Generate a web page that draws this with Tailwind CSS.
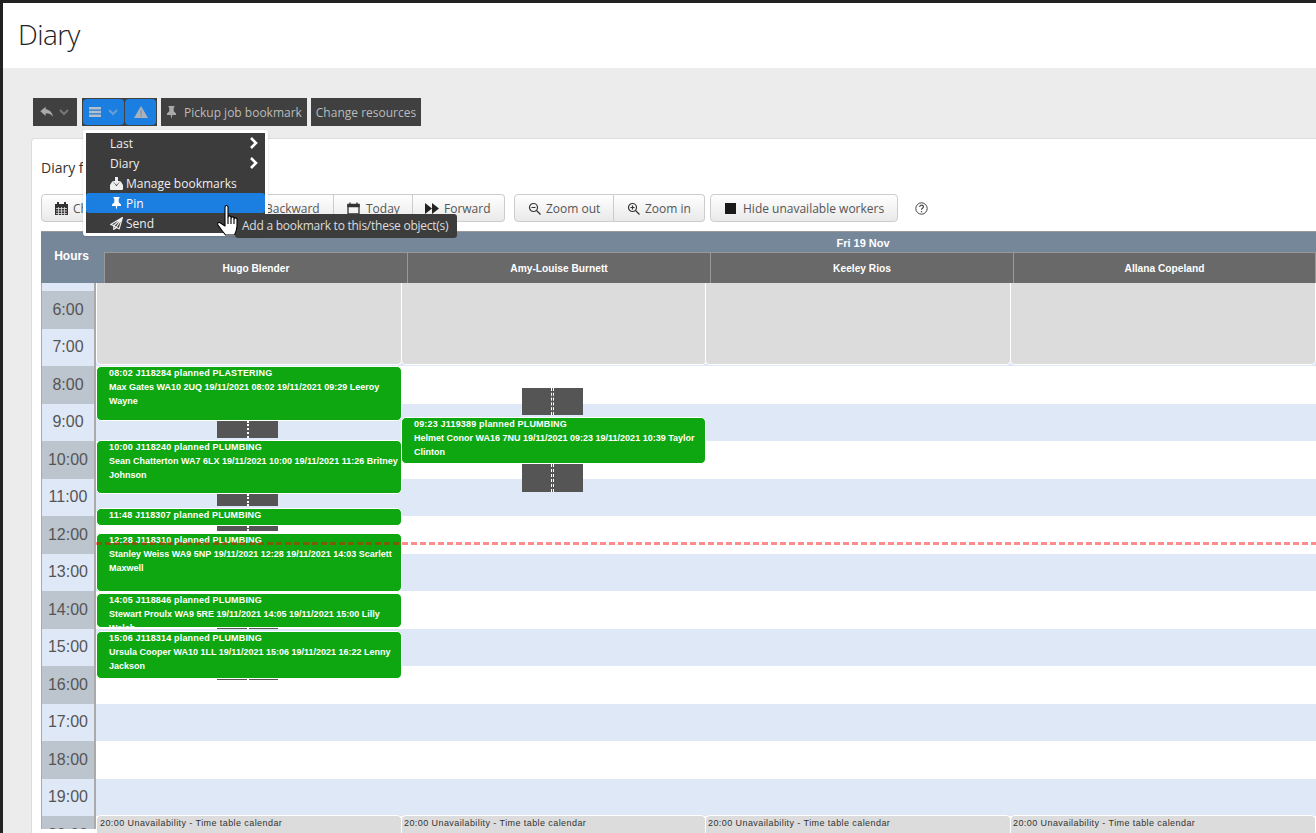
<!DOCTYPE html>
<html lang="en">
<head>
<meta charset="UTF-8">
<title>Diary</title>
<script src="https://cdn.jsdelivr.net/npm/@tailwindcss/browser@4"></script>
</head>
<body class="h-[833px] overflow-hidden bg-[#ececec] font-['Open_Sans',sans-serif]">
<div class="relative h-[833px] overflow-hidden border-t-[3px] border-l-[3px] border-[#222]">

  <!-- page title -->
  <div class="h-[65px] bg-white pl-[15px] pt-[12px] text-[28px] leading-[38px] font-light text-[#222] tracking-[-0.6px]">Diary</div>

  <!-- top toolbar -->
  <div class="flex h-[28px] mt-[30px] ml-[30px] text-[12px] text-[#bbb]">
    <div class="flex w-[44px] items-center bg-[#404040] pl-[6px]">
      <svg class="w-[16px] h-[16px]" viewBox="0 0 24 24" fill="#aaa"><path d="M10 8V4L2 11l8 7v-4.200c5 0 8.500 1.500 11 5.200-1-5.300-4-10-11-11z"/></svg>
      <svg class="w-[10px] h-[10px] ml-[4px]" viewBox="0 0 10 10" fill="none" stroke="#777" stroke-width="2"><path d="M1 3l4 4 4-4"/></svg>
    </div>
    <div class="flex ml-[5px] w-[75px] bg-[#404040] p-[1px] gap-[1px]">
      <div class="flex w-[41px] items-center rounded-[4px] bg-[#1a7fe0] pl-[5px]">
        <svg class="w-[14px] h-[12px]" viewBox="0 0 14 12" fill="#b8bec6"><path d="M1 1h12v2.500H1zM1 4.800h12v2.500H1zM1 8.600h12v2.500H1z"/></svg>
        <svg class="w-[10px] h-[10px] ml-[6px]" viewBox="0 0 10 10" fill="none" stroke="#6a9fd6" stroke-width="2"><path d="M1 3l4 4 4-4"/></svg>
      </div>
      <div class="flex flex-1 items-center justify-center rounded-[4px] bg-[#1a7fe0]">
        <svg class="w-[14px] h-[12px]" viewBox="0 0 14 12"><path fill="#aab2bc" d="M7 0l7 12H0z"/><path fill="#8a95a3" d="M6.200 4h1.600v4.500H6.200zM6.200 9.300h1.600v1.500H6.200z"/></svg>
      </div>
    </div>
    <div class="flex items-center ml-[4px] w-[146px] bg-[#404040] pl-[6px]">
      <svg class="w-[9px] h-[13px] shrink-0 mr-[8px]" viewBox="0 0 9 13" fill="#aaa"><path d="M1.500 0h6v1l-.8.7v3.500L9 7.500V9H5.300l-.8 4-.8-4H0V7.500l2.300-2.300V1.700L1.500 1z"/></svg>
      <span class="whitespace-nowrap pt-[1px]">Pickup job bookmark</span>
    </div>
    <div class="flex items-center justify-center ml-[4px] w-[110px] bg-[#404040] whitespace-nowrap pt-[1px]">Change resources</div>
  </div>

  <!-- main card -->
  <div class="mt-[12px] ml-[28px] h-[700px] rounded-tl-[4px] border-t border-l border-[#ddd] bg-white pl-[9px]">
    <div class="pt-[19px] h-[55px] text-[14px] leading-[19px] text-[#333]">Diary for 19/11/2021</div>

    <!-- diary buttons -->
    <div class="flex h-[28px] items-center text-[12px] text-[#555]">
      <div class="flex h-[28px] w-[179px] items-center rounded-[4px] border border-[#ccc] bg-gradient-to-b from-white to-[#e9e9e9] pl-[13px]">
        <svg class="w-[13px] h-[13px] mr-[5px]" viewBox="0 0 13 13"><path fill="#333" d="M0 2h13v11H0zM2 0h2v3H2zM9 0h2v3H9z"/><path stroke="#ddd" stroke-width=".8" d="M1 6.500h11M1 9h11M1 11.500h11M3.500 5v8M6.500 5v8M9.500 5v8"/></svg>
        <span class="mt-[2px]">Change date</span>
      </div>
      <div class="flex h-[28px] w-[114px] items-center border-y border-r border-[#ccc] bg-gradient-to-b from-white to-[#e9e9e9] pl-[45px]"><span class="mt-[2px]">Backward</span></div>
      <div class="flex h-[28px] w-[79px] items-center border-y border-r border-[#ccc] bg-gradient-to-b from-white to-[#e9e9e9] pl-[13px]">
        <svg class="w-[13px] h-[13px] mr-[6px]" viewBox="0 0 13 13" fill="none" stroke="#333" stroke-width="1.300"><path d="M1 2.500h11v9.500H1z"/><path d="M1 3h11v1.500H1zM3 .5v2M10 .5v2"/></svg>
        <span class="mt-[2px]">Today</span>
      </div>
      <div class="flex h-[28px] w-[92px] items-center rounded-r-[4px] border-y border-r border-[#ccc] bg-gradient-to-b from-white to-[#e9e9e9] pl-[12px]">
        <svg class="w-[14px] h-[11px] mr-[5px]" viewBox="0 0 14 11" fill="#222"><path d="M0 0l7 5.500L0 11zM7 0l7 5.500L7 11z"/></svg>
        <span class="mt-[2px]">Forward</span>
      </div>
      <div class="flex h-[28px] w-[100px] ml-[9px] items-center rounded-l-[4px] border border-[#ccc] bg-gradient-to-b from-white to-[#e9e9e9] pl-[13px]">
        <svg class="w-[13px] h-[13px] mr-[5px]" viewBox="0 0 13 13" fill="none" stroke="#333" stroke-width="1.200"><circle cx="5.500" cy="5.500" r="4"/><path d="M8.500 8.500L12.500 12.500M3.500 5.500h4"/></svg>
        <span class="mt-[2px]">Zoom out</span>
      </div>
      <div class="flex h-[28px] w-[91px] items-center rounded-r-[4px] border-y border-r border-[#ccc] bg-gradient-to-b from-white to-[#e9e9e9] pl-[13px]">
        <svg class="w-[13px] h-[13px] mr-[5px]" viewBox="0 0 13 13" fill="none" stroke="#333" stroke-width="1.200"><circle cx="5.500" cy="5.500" r="4"/><path d="M8.500 8.500L12.500 12.500M3.500 5.500h4M5.500 3.500v4"/></svg>
        <span class="mt-[2px]">Zoom in</span>
      </div>
      <div class="flex h-[28px] w-[188px] ml-[5px] items-center rounded-[4px] border border-[#ccc] bg-gradient-to-b from-white to-[#e9e9e9] pl-[14px]">
        <span class="w-[11px] h-[11px] mr-[7px] bg-[#1a1a1a]"></span>
        <span class="mt-[2px]">Hide unavailable workers</span>
      </div>
      <svg class="w-[13px] h-[13px] ml-[17px]" viewBox="0 0 13 13" fill="none" stroke="#444"><circle cx="6.500" cy="6.500" r="5.700"/><path d="M4.700 5c0-2.500 3.700-2.500 3.700-.3 0 1.500-1.900 1.500-1.900 3.100M6.500 9v1.300" stroke-width="1.200"/></svg>
    </div>

    <!-- calendar header -->
    <div class="flex mt-[9px] h-[52px] overflow-hidden bg-[#76879a] border-t border-[#999] font-['Liberation_Sans',sans-serif] text-white font-bold">
      <div class="flex w-[63px] shrink-0 items-center justify-center pb-[4px] pr-[2px] text-[12px]">Hours</div>
      <div class="flex min-w-0 flex-1 flex-col">
        <div class="flex h-[20px] w-[1518px] shrink-0 items-center justify-center pt-[2px] text-[11px]">Fri 19 Nov</div>
        <div class="flex h-[31px] border-t border-[#999] text-[10.2px]">
          <div class="flex w-[303px] shrink-0 items-center justify-center bg-[#696969] border-l border-[#999] pt-[2px]">Hugo Blender</div>
          <div class="flex w-[303px] shrink-0 items-center justify-center bg-[#696969] border-l border-[#999] pt-[2px]">Amy-Louise Burnett</div>
          <div class="flex w-[303px] shrink-0 items-center justify-center bg-[#696969] border-l border-[#999] pt-[2px]">Keeley Rios</div>
          <div class="flex w-[303px] shrink-0 items-center justify-center bg-[#696969] border-x border-[#999] pt-[2px]">Allana Copeland</div>
        </div>
      </div>
    </div>

    <!-- calendar body -->
    <div class="flex font-['Liberation_Sans',sans-serif]">
      <div class="h-[546px] w-[55px] shrink-0 overflow-hidden border-x border-r-2 border-l-[#aaa] border-r-[#aaa] bg-white text-[16px] text-[#555]">
        <div class="h-[8px] bg-[#dfe8f7]"></div>
        <div class="flex h-[37.5px] items-center justify-center bg-[#bcc4ce]">6:00</div>
        <div class="flex h-[37.5px] items-center justify-center bg-[#dfe8f7]">7:00</div>
        <div class="flex h-[37.5px] items-center justify-center bg-[#bcc4ce]">8:00</div>
        <div class="flex h-[37.5px] items-center justify-center bg-[#dfe8f7]">9:00</div>
        <div class="flex h-[37.5px] items-center justify-center bg-[#bcc4ce]">10:00</div>
        <div class="flex h-[37.5px] items-center justify-center bg-[#dfe8f7]">11:00</div>
        <div class="flex h-[37.5px] items-center justify-center bg-[#bcc4ce]">12:00</div>
        <div class="flex h-[37.5px] items-center justify-center bg-[#dfe8f7]">13:00</div>
        <div class="flex h-[37.5px] items-center justify-center bg-[#bcc4ce]">14:00</div>
        <div class="flex h-[37.5px] items-center justify-center bg-[#dfe8f7]">15:00</div>
        <div class="flex h-[37.5px] items-center justify-center bg-[#bcc4ce]">16:00</div>
        <div class="flex h-[37.5px] items-center justify-center bg-[#dfe8f7]">17:00</div>
        <div class="flex h-[37.5px] items-center justify-center bg-[#bcc4ce]">18:00</div>
        <div class="flex h-[37.5px] items-center justify-center bg-[#dfe8f7]">19:00</div>
        <div class="flex h-[37.5px] items-center justify-center bg-[#bcc4ce]">20:00</div>
      </div>

      <div class="relative h-[550px] flex-1 overflow-hidden bg-white">
        <!-- stripes -->
        <div class="h-[8px]"></div>
        <div class="h-[37.5px]"></div>
        <div class="h-[37.5px] bg-[#dfe8f7]"></div>
        <div class="h-[37.5px]"></div>
        <div class="h-[37.5px] bg-[#dfe8f7]"></div>
        <div class="h-[37.5px]"></div>
        <div class="h-[37.5px] bg-[#dfe8f7]"></div>
        <div class="h-[37.5px]"></div>
        <div class="h-[37.5px] bg-[#dfe8f7]"></div>
        <div class="h-[37.5px]"></div>
        <div class="h-[37.5px] bg-[#dfe8f7]"></div>
        <div class="h-[37.5px]"></div>
        <div class="h-[37.5px] bg-[#dfe8f7]"></div>
        <div class="h-[37.5px]"></div>
        <div class="h-[37.5px] bg-[#dfe8f7]"></div>

        <!-- unavailable morning -->
        <div class="absolute left-0 top-0 h-[82px] w-[306px] rounded-b-[5px] border-x border-b border-white bg-[#dcdcdc]"></div>
        <div class="absolute left-[305px] top-0 h-[82px] w-[306px] rounded-b-[5px] border-x border-b border-white bg-[#dcdcdc]"></div>
        <div class="absolute left-[609px] top-0 h-[82px] w-[306px] rounded-b-[5px] border-x border-b border-white bg-[#dcdcdc]"></div>
        <div class="absolute left-[914px] top-0 h-[82px] w-[306px] rounded-b-[5px] border-x border-b border-white bg-[#dcdcdc]"></div>

        <!-- travel blocks -->
        <div class="absolute left-[121px] top-[138px] h-[17px] w-[61px] bg-[#555]"><div class="ml-[30px] h-full w-0 border-l-2 border-dotted border-white"></div></div>
        <div class="absolute left-[121px] top-[211px] h-[12px] w-[61px] bg-[#555]"><div class="ml-[30px] h-full w-0 border-l-2 border-dotted border-white"></div></div>
        <div class="absolute left-[121px] top-[243px] h-[5px] w-[61px] bg-[#555]"><div class="ml-[30px] h-full w-0 border-l-2 border-dotted border-white"></div></div>
        <div class="absolute left-[121px] top-[345px] h-[1px] w-[61px] bg-[#555]"><div class="ml-[30px] h-full w-[2px] bg-white"></div></div>
        <div class="absolute left-[121px] top-[396px] h-[1px] w-[61px] bg-[#555]"><div class="ml-[30px] h-full w-[2px] bg-white"></div></div>
        <div class="absolute left-[426px] top-[105px] flex h-[27px] w-[61px] justify-center gap-[1px] bg-[#555]"><div class="h-full w-0 border-l border-dashed border-white"></div><div class="h-full w-0 border-l border-dashed border-white"></div></div>
        <div class="absolute left-[426px] top-[181px] flex h-[28px] w-[61px] justify-center gap-[1px] bg-[#555]"><div class="h-full w-0 border-l border-dashed border-white"></div><div class="h-full w-0 border-l border-dashed border-white"></div></div>

        <!-- jobs -->
        <div class="absolute left-0 top-[83px] h-[55px] w-[306px] overflow-hidden rounded-[5px] border border-white bg-[#0fa711] pl-[12px] text-[9px] leading-[14px] font-bold text-white">
          <div class="-mt-[1px] tracking-[0.18px]">08:02 J118284 planned PLASTERING</div><div>Max Gates WA10 2UQ 19/11/2021 08:02 19/11/2021 09:29 Leeroy Wayne</div>
        </div>
        <div class="absolute left-0 top-[157px] h-[54px] w-[306px] overflow-hidden rounded-[5px] border border-white bg-[#0fa711] pl-[12px] text-[9px] leading-[14px] font-bold text-white">
          <div class="-mt-[1px] tracking-[0.18px]">10:00 J118240 planned PLUMBING</div><div>Sean Chatterton WA7 6LX 19/11/2021 10:00 19/11/2021 11:26 Britney Johnson</div>
        </div>
        <div class="absolute left-0 top-[225px] h-[18px] w-[306px] overflow-hidden rounded-[5px] border border-white bg-[#0fa711] pl-[12px] text-[9px] leading-[14px] font-bold text-white">
          <div class="-mt-[1px] tracking-[0.18px]">11:48 J118307 planned PLUMBING</div>
        </div>
        <div class="absolute left-0 top-[250px] h-[59px] w-[306px] overflow-hidden rounded-[5px] border border-white bg-[#0fa711] pl-[12px] text-[9px] leading-[14px] font-bold text-white">
          <div class="-mt-[1px] tracking-[0.18px]">12:28 J118310 planned PLUMBING</div><div>Stanley Weiss WA9 5NP 19/11/2021 12:28 19/11/2021 14:03 Scarlett Maxwell</div>
        </div>
        <div class="absolute left-0 top-[310px] h-[35px] w-[306px] overflow-hidden rounded-[5px] border border-white bg-[#0fa711] pl-[12px] text-[9px] leading-[14px] font-bold text-white">
          <div class="-mt-[1px] tracking-[0.18px]">14:05 J118846 planned PLUMBING</div><div>Stewart Proulx WA9 5RE 19/11/2021 14:05 19/11/2021 15:00 Lilly Walsh</div>
        </div>
        <div class="absolute left-0 top-[348px] h-[48px] w-[306px] overflow-hidden rounded-[5px] border border-white bg-[#0fa711] pl-[12px] text-[9px] leading-[14px] font-bold text-white">
          <div class="-mt-[1px] tracking-[0.18px]">15:06 J118314 planned PLUMBING</div><div>Ursula Cooper WA10 1LL 19/11/2021 15:06 19/11/2021 16:22 Lenny Jackson</div>
        </div>
        <div class="absolute left-[305px] top-[134px] h-[47px] w-[305px] overflow-hidden rounded-[5px] border border-white bg-[#0fa711] pl-[12px] text-[9px] leading-[14px] font-bold text-white">
          <div class="-mt-[1px] tracking-[0.18px]">09:23 J119389 planned PLUMBING</div><div>Helmet Conor WA16 7NU 19/11/2021 09:23 19/11/2021 10:39 Taylor Clinton</div>
        </div>

        <!-- now line -->
        <div class="absolute left-0 right-0 top-[259px] h-[3px] bg-[repeating-linear-gradient(90deg,#ff000073_0,#ff000073_6px,transparent_6px,transparent_9px)]"></div>

        <!-- evening unavailability -->
        <div class="absolute left-0 top-[532px] h-[30px] w-[306px] rounded-t-[5px] border border-white bg-[#dcdcdc] pl-[3px] pt-[1px] text-[9px] leading-[13px] tracking-[0.42px] text-[#333]">20:00 Unavailability - Time table calendar</div>
        <div class="absolute left-[305px] top-[532px] h-[30px] w-[305px] rounded-t-[5px] border border-white bg-[#dcdcdc] pl-[2px] pt-[1px] text-[9px] leading-[13px] tracking-[0.42px] text-[#333]">20:00 Unavailability - Time table calendar</div>
        <div class="absolute left-[609px] top-[532px] h-[30px] w-[306px] rounded-t-[5px] border border-white bg-[#dcdcdc] pl-[2px] pt-[1px] text-[9px] leading-[13px] tracking-[0.42px] text-[#333]">20:00 Unavailability - Time table calendar</div>
        <div class="absolute left-[914px] top-[532px] h-[30px] w-[306px] rounded-t-[5px] border border-white bg-[#dcdcdc] pl-[2px] pt-[1px] text-[9px] leading-[13px] tracking-[0.42px] text-[#333]">20:00 Unavailability - Time table calendar</div>
      </div>
    </div>
  </div>

  <!-- dropdown menu -->
  <div class="absolute left-[80px] top-[127px] w-[185px] rounded-[3px] bg-white p-[3px] shadow-sm text-[12px] leading-[20px] text-[#eee]">
    <div class="bg-[#3c3c3c]">
      <div class="flex h-[20px] items-center justify-between pl-[24px] pr-[7px] pt-[2px]">Last
        <svg class="w-[9px] h-[12px] -mt-[2px]" viewBox="0 0 9 12" fill="none" stroke="#fff" stroke-width="2.600"><path d="M2 1l5 5-5 5"/></svg>
      </div>
      <div class="flex h-[20px] items-center justify-between pl-[24px] pr-[7px] pt-[2px]">Diary
        <svg class="w-[9px] h-[12px] -mt-[2px]" viewBox="0 0 9 12" fill="none" stroke="#fff" stroke-width="2.600"><path d="M2 1l5 5-5 5"/></svg>
      </div>
      <div class="flex h-[20px] items-center pl-[24px] pt-[2px]">
        <svg class="w-[13px] h-[13px] mr-[3px] -mt-[2px]" viewBox="0 0 13 13" fill="#eee"><path d="M5 0h3v4h2.500L6.500 8l-4-4H5z"/><path d="M2.200 4.500H3l3.500 4.800L10 4.500h.8L13 8v4a1 1 0 01-1 1H1a1 1 0 01-1-1V8z"/></svg>
        <span>Manage bookmarks</span>
      </div>
      <div class="flex h-[20px] items-center rounded-[3px] bg-[#1a7fe0] pl-[26px] pt-[2px] text-white">
        <svg class="w-[9px] h-[13px] mr-[5px] -mt-[2px]" viewBox="0 0 9 13" fill="#fff"><path d="M1.500 0h6v1l-.8.7v3.500L9 7.500V9H5.300l-.8 4-.8-4H0V7.500l2.300-2.300V1.700L1.500 1z"/></svg>
        <span>Pin</span>
      </div>
      <div class="flex h-[20px] items-center pl-[24px] pt-[2px]">
        <svg class="w-[13px] h-[13px] mr-[3px] -mt-[2px]" viewBox="0 0 13 13" fill="none" stroke="#eee" stroke-width="1.200"><path d="M12.400.6L.8 7.400l3 1.300L12.400.6l-6.200 9.900-2.400-1.800v3.700l2.400-1.900 3 1.300z"/></svg>
        <span>Send</span>
      </div>
    </div>
  </div>

  <!-- tooltip -->
  <div class="absolute left-[232px] top-[211px] h-[24px] w-[222px] rounded-[3px] bg-[#3c3c3c] pl-[7px] text-[12px] leading-[24px] tracking-[-0.25px] whitespace-nowrap text-[#ddd]">Add a bookmark to this/these object(s)</div>

  <!-- mouse pointer -->
  <svg class="absolute left-[214px] top-[201px] w-[26px] h-[34px]" viewBox="0 0 26 34" fill="#fff" stroke="#000" stroke-width="1.100" stroke-linejoin="round"><path d="M8 3c0-2 3-2 3 0v10c0-1.500 3-1.500 3 0v1c0-1.500 3-1.500 3 0v1c0-1.500 3-1.500 3 0v7c0 4-1.500 7-2.500 9H8.500C6 28 3 24 1 21c-1-2 1-3.500 2.500-2L8 22z"/><path d="M11 13v7M14 14v6M17 15v5" fill="none"/></svg>
</div>
</body>
</html>
